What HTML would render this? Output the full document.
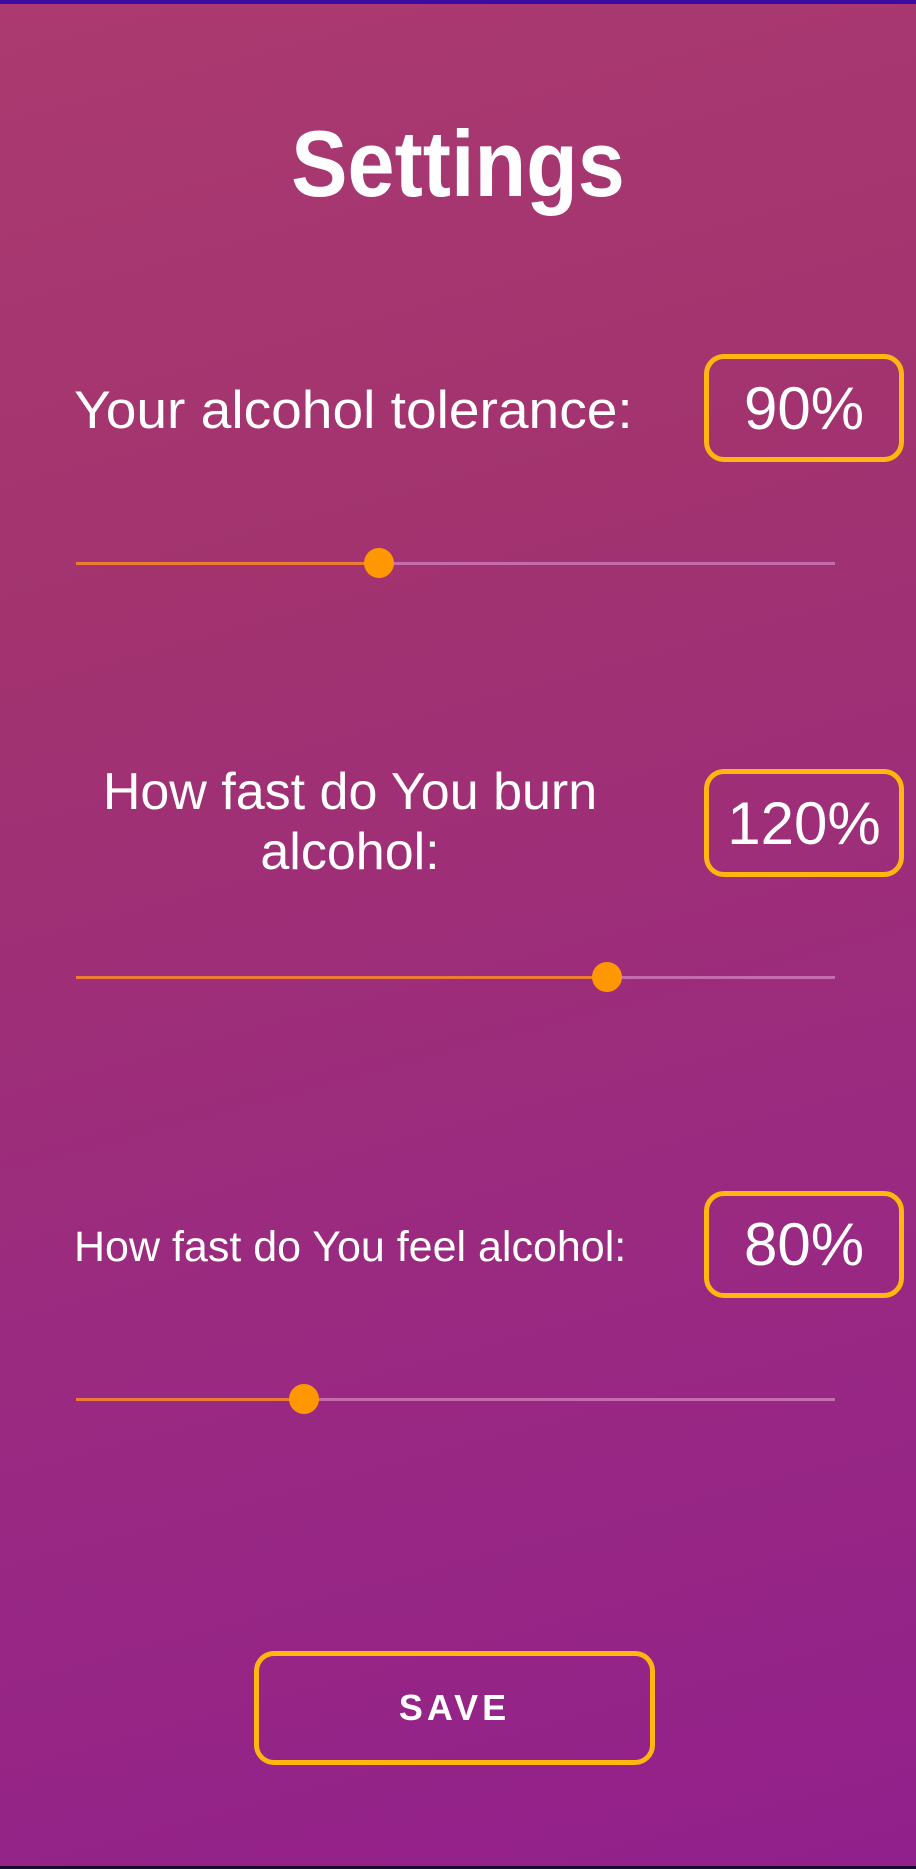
<!DOCTYPE html>
<html><head><meta charset="utf-8"><style>
html,body{margin:0;padding:0}
body{width:916px;height:1869px;position:relative;overflow:hidden;font-family:"Liberation Sans",sans-serif;color:#fff;
background:linear-gradient(165deg,#ab3a70 0%,#a2336f 30%,#9a2a80 65%,#92208c 100%)}
.top{position:absolute;left:0;top:0;width:916px;height:4px;background:#3a0ca3}
.bot{position:absolute;left:0;bottom:0;width:916px;height:3px;background:#1a0a2a}
.t{position:absolute;white-space:nowrap}
.title{left:0;width:916px;text-align:center;top:110px;font-size:94px;font-weight:bold;transform:scaleX(.9)}
.lbl{font-size:50px;transform-origin:left top}
.box{position:absolute;left:704px;width:200px;border:5px solid #ffb60f;border-radius:20px;box-sizing:border-box;display:flex;align-items:center;justify-content:center;font-size:60px}
.track{position:absolute;left:76px;width:759px;height:3px;background:#c46cae}
.act{position:absolute;left:0;top:0;height:3px;background:#ec7b34}
.thumb{position:absolute;width:30px;height:30px;border-radius:50%;background:#ff9800;top:-14px;margin-left:-15px}
.save{position:absolute;left:254px;top:1651px;width:401px;height:114px;border:5px solid #ffb60f;border-radius:20px;box-sizing:border-box;display:flex;align-items:center;justify-content:center;font-size:36px;font-weight:bold;letter-spacing:4px}
</style></head><body>
<div class="top"></div>
<div class="t title">Settings</div>

<div class="t lbl" style="left:74px;top:380px;font-size:53px;transform:scaleX(1.04)">Your alcohol tolerance:</div>
<div class="box" style="top:354px;height:108px">90%</div>
<div class="track" style="top:562px"><div class="act" style="width:303px"></div><div class="thumb" style="left:303px"></div></div>

<div class="t lbl" style="left:0;width:700px;text-align:center;top:762px;font-size:52px;line-height:60px">How fast do You burn<br>alcohol:</div>
<div class="box" style="top:769px;height:108px">120%</div>
<div class="track" style="top:976px"><div class="act" style="width:531px"></div><div class="thumb" style="left:531px"></div></div>

<div class="t lbl" style="left:74px;top:1223px;font-size:43px">How fast do You feel alcohol:</div>
<div class="box" style="top:1191px;height:107px">80%</div>
<div class="track" style="top:1398px"><div class="act" style="width:228px"></div><div class="thumb" style="left:228px"></div></div>

<div class="save">SAVE</div>
<div class="bot"></div>
</body></html>
